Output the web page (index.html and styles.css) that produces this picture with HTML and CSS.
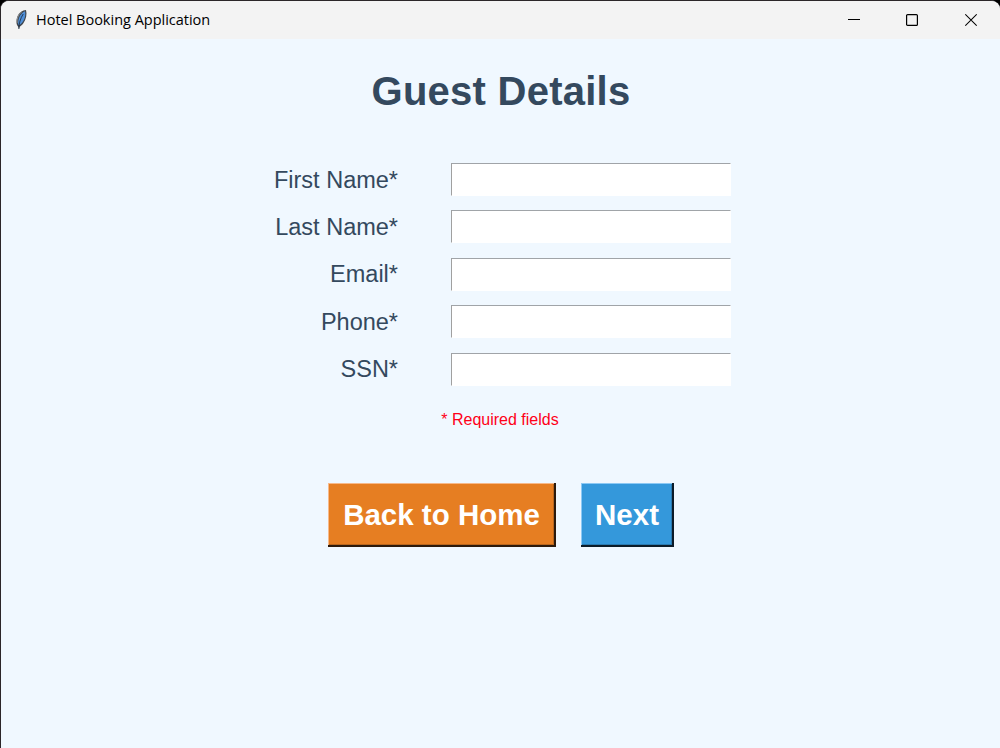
FILE: index.html
```html
<!DOCTYPE html>
<html lang="en">
<head>
<meta charset="utf-8">
<title>Hotel Booking Application</title>
<link rel="stylesheet" href="styles.css">
</head>
<body>
<div class="window">
  <header class="titlebar">
    <svg class="feather" width="14" height="22" viewBox="0 0 14 22">
      <path d="M4.9 20 L4.2 17.8 C2 15.5 2 11 3.6 7 C5.2 3.5 8.5 1.2 12 1 C13.2 5 12.2 10.5 9.2 14.5 C7.8 16.2 6.6 17.2 5.8 17.6 Z" fill="#3f454d"/>
      <path d="M4.4 15.8 C3.4 11 5.8 4.4 11 2.2 C12 6.8 10.2 12.8 5.4 16 Z" fill="#4f8fd8"/>
      <path d="M3 14 C2.6 10 4.2 5.6 7.4 3" fill="none" stroke="#9b9b9b" stroke-width=".9"/>
      <path d="M4.9 20 C4.8 14.5 6.4 9.5 9.2 5" fill="none" stroke="#142338" stroke-width=".8"/>
    </svg>
    <span class="caption">Hotel Booking Application</span>
    <div class="controls">
      <svg width="12" height="14" viewBox="0 0 12 14"><path d="M0 6.5H12" stroke="#000"/></svg>
      <svg width="12" height="14" viewBox="0 0 12 14"><rect x=".6" y="1.6" width="10.8" height="10.8" rx="1" fill="none" stroke="#000" stroke-width="1.2"/></svg>
      <svg class="close" width="12" height="14" viewBox="0 0 12 14"><path d="M.3 1.3L11.7 12.7M11.7 1.3L.3 12.7" stroke="#000" stroke-width="1.15"/></svg>
    </div>
  </header>
  <main class="page">
    <h1 class="heading">Guest Details</h1>
    <form class="form">
      <label class="label" for="first">First Name*</label><input class="entry" id="first">
      <label class="label" for="last">Last Name*</label><input class="entry" id="last">
      <label class="label" for="email">Email*</label><input class="entry" id="email">
      <label class="label" for="phone">Phone*</label><input class="entry" id="phone">
      <label class="label" for="ssn">SSN*</label><input class="entry" id="ssn">
    </form>
    <p class="note">* Required fields</p>
    <div class="actions">
      <button class="button back" type="button">Back to Home</button>
      <button class="button next" type="button">Next</button>
    </div>
  </main>
</div>
</body>
</html>
```
FILE: styles.css
```css
* { box-sizing: border-box; }
body { margin: 0; background: #000; font-family: "Liberation Sans", Arial, sans-serif; }
.window {
  height: 748px;
  border-top: 1px solid #2b2629;
  border-left: 1px solid #2b2629;
  border-radius: 9px 9px 0 0;
  background: #f0f8ff;
  overflow: hidden;
}
.titlebar {
  display: flex;
  align-items: center;
  height: 38px;
  padding: 0 23px 0 13px;
  background: #f3f3f3;
}
.feather { margin-right: 8px; margin-top: -1px; }
.caption {
  font: 14.5px/20px "Open Sans", sans-serif;
  letter-spacing: -.01px;
  color: #000;
  white-space: nowrap;
}
.controls { display: flex; gap: 46px; margin-left: auto; }
.controls svg { display: block; }
.controls .close { margin-left: 1px; }
.page { display: flex; flex-direction: column; align-items: center; }
.heading {
  margin: 28px 0 0;
  padding-left: 1px;
  font-size: 40px;
  line-height: 49px;
  letter-spacing: .25px;
  color: #34495e;
}
.form {
  display: grid;
  grid-template-columns: 124px 280px;
  column-gap: 53px;
  row-gap: 14.4px;
  margin-top: 47px;
  margin-left: 4px;
}
.label {
  justify-self: end;
  padding-top: .6px;
  font-size: 23.5px;
  line-height: 32.4px;
  white-space: nowrap;
  color: #34495e;
}
.entry {
  width: 280px;
  height: 33px;
  padding: 2px 4px;
  border: 1px solid #fff;
  border-top-color: #a0a4a8;
  border-left-color: #a0a0a0;
  border-radius: 0;
  background: #fff;
  outline: 0;
  font: 23.5px "Liberation Sans", sans-serif;
}
.note {
  margin: 24.4px 0 0;
  padding-right: 1px;
  font-size: 16px;
  line-height: 20px;
  color: #ff0018;
}
.actions { display: flex; gap: 25px; margin-top: 53px; }
.button {
  height: 64px;
  padding: 0;
  border: 0;
  border-radius: 0;
  font: bold 29.5px/64px "Liberation Sans", Arial, sans-serif;
  color: #fff;
}
.back {
  width: 228px;
  background: #e67e22;
  box-shadow: inset -2px -2px #2c1a0c, inset 1px 1px #f7b98a, inset -3px -3px #b9661d;
}
.next {
  width: 93px;
  background: #3498db;
  box-shadow: inset -2px -2px #0c1c29, inset 1px 1px #8cc9f5, inset -3px -3px #2a7ab0;
}
```
